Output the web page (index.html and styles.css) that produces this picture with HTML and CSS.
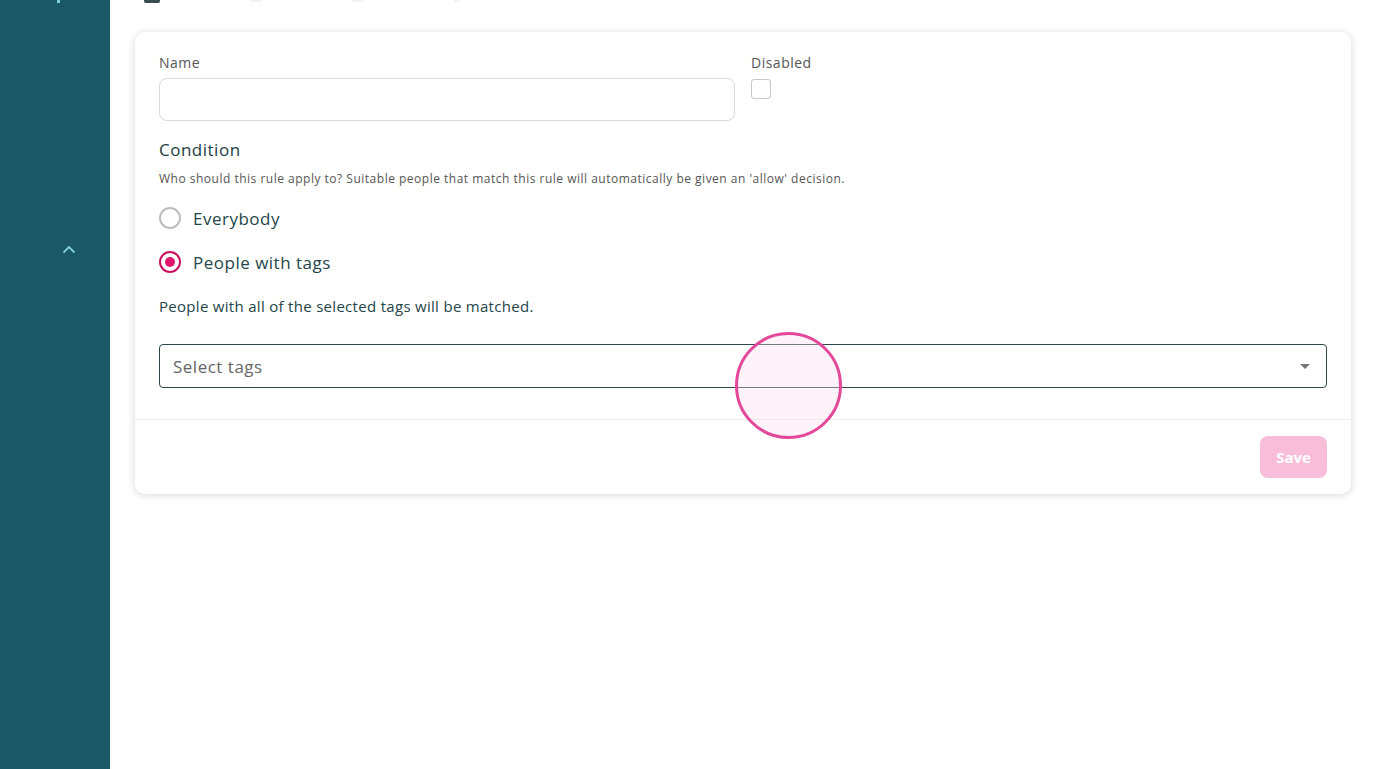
FILE: index.html
```html
<!DOCTYPE html>
<html lang="en">
    <head>
        <meta charset="utf-8">
        <title>Rule</title>
        <link rel="stylesheet" href="styles.css">
    </head>
    <body>
    <div class="layout">
        <aside class="sidebar">
            <span class="side-dot"></span>
            <button class="collapse" type="button">
                <svg width="14" height="9" viewBox="0 0 14 9"><path d="M1.5 7.5L7 2l5.5 5.5" fill="none" stroke="#7fcfdb" stroke-width="1.8"/></svg>
            </button>
        </aside>
        <main class="main">
            <div class="tabs">
                <span class="tab-mark"></span>
                <span class="tab-crumb"></span>
                <span class="tab-crumb"></span>
                <span class="tab-crumb small"></span>
            </div>
            <form class="card">
                <div class="card-body">
                    <div class="row">
                        <label class="field name-field">
                            <span class="label">Name</span>
                            <input class="text-input" type="text">
                        </label>
                        <label class="field">
                            <span class="label">Disabled</span>
                            <span class="checkbox"></span>
                        </label>
                    </div>

                    <h3 class="section-title">Condition</h3>
                    <p class="hint">Who should this rule apply to? Suitable people that match this rule will automatically be given an 'allow' decision.</p>

                    <label class="radio">
                        <span class="radio-dot"></span>
                        Everybody
                    </label>
                    <label class="radio">
                        <span class="radio-dot checked"></span>
                        People with tags
                    </label>

                    <p class="note">People with all of the selected tags will be matched.</p>

                    <div class="select">
                        <span class="placeholder">Select tags</span>
                        <span class="caret"></span>
                    </div>
                </div>
                <div class="card-foot">
                    <button class="save" type="button" disabled>Save</button>
                </div>
            </form>
        </main>
    </div>
    <div class="touch"></div>
    </body>
</html>
```

FILE: styles.css
```css
*{box-sizing:border-box;}
body{
    margin:0;
    font-family:"Open Sans",Lato,"Liberation Sans",sans-serif;
    color:#24454a;
    background:#fff;
    letter-spacing:.5px;
}
.layout{display:flex;min-height:769px;}

/* left nav */
.sidebar{
    width:110px;
    flex:none;
    background:#1b5865;
    display:flex;
    flex-direction:column;
    align-items:center;
}
.side-dot{width:3px;height:3px;background:#7fcfdb;margin-left:6px;}
.collapse{
    margin-top:239px;
    margin-left:28px;
    background:none;
    border:0;
    padding:0;
    height:14px;
}

.main{flex:1;padding:0 25px 0 25px;}

/* tab row, scrolled off the top */
.tabs{height:32px;display:flex;align-items:flex-start;gap:90px;padding-left:9px;}
.tab-mark{width:16px;height:3px;background:#3b4a4e;border-radius:0 0 2px 2px;}
.tab-crumb{width:12px;height:2px;background:#f2f2f2;}
.tab-crumb.small{width:6px;}

.card{
    background:#fff;
    border-radius:10px;
    box-shadow:0 1px 8px rgba(0,0,0,.16);
}
.card-body{padding:22px 24px 31px;}

.row{display:flex;gap:16px;}
.field{display:flex;flex-direction:column;}
.name-field{width:576px;}
.label{font-size:14px;color:#555;line-height:18px;margin-bottom:6px;}
.text-input{
    height:43px;
    border:1px solid #d9d9d9;
    border-radius:8px;
    font:inherit;
}
.checkbox{
    width:20px;
    height:20px;
    border:1px solid #c8c8c8;
    border-radius:3px;
    margin-top:1px;
}

.section-title{
    margin:18px 0 0;
    font-size:17px;
    font-weight:400;
    color:#1d3d42;
    line-height:22px;
}
.hint{margin:10px 0 0;font-size:12px;color:#555;line-height:16px;letter-spacing:.5px;}

.radio{
    display:flex;
    align-items:center;
    gap:12px;
    font-size:17px;
    color:#24454a;
    margin-top:18px;
    height:26px;
}
.radio + .radio{margin-top:18px;}
.radio-dot{
    width:22px;
    height:22px;
    border:2px solid #bdbdbd;
    border-radius:50%;
    display:flex;
    align-items:center;
    justify-content:center;
}
.radio-dot.checked{border-color:#c9105f;}
.radio-dot.checked::after{
    content:"";
    width:10px;
    height:10px;
    border-radius:50%;
    background:#e0156d;
}

.note{margin:21px 0 0;font-size:15px;color:#24454a;line-height:20px;letter-spacing:.3px;}

.select{
    margin-top:28px;
    height:44px;
    border:1px solid #2f474c;
    border-radius:4px;
    display:flex;
    align-items:center;
    justify-content:space-between;
    padding:0 16px 0 13px;
}
.placeholder{font-size:17px;color:#666;}
.caret{
    width:0;
    height:0;
    border-left:5px solid transparent;
    border-right:5px solid transparent;
    border-top:5px solid #777;
}

.card-foot{
    border-top:1px solid #ececec;
    padding:16px 24px 16px;
    display:flex;
    justify-content:flex-end;
}
.save{
    height:42px;
    width:67px;
    border:0;
    border-radius:8px;
    background:#f8bdd9;
    color:#fff;
    font:700 15px "Open Sans",Lato,sans-serif;
    letter-spacing:0;
}

/* tap highlight from the recording */
.touch{
    position:absolute;
    left:735px;
    top:332px;
    width:107px;
    height:107px;
    border:3px solid #e4489a;
    border-radius:50%;
    background:rgba(250,220,236,.35);
}
```
